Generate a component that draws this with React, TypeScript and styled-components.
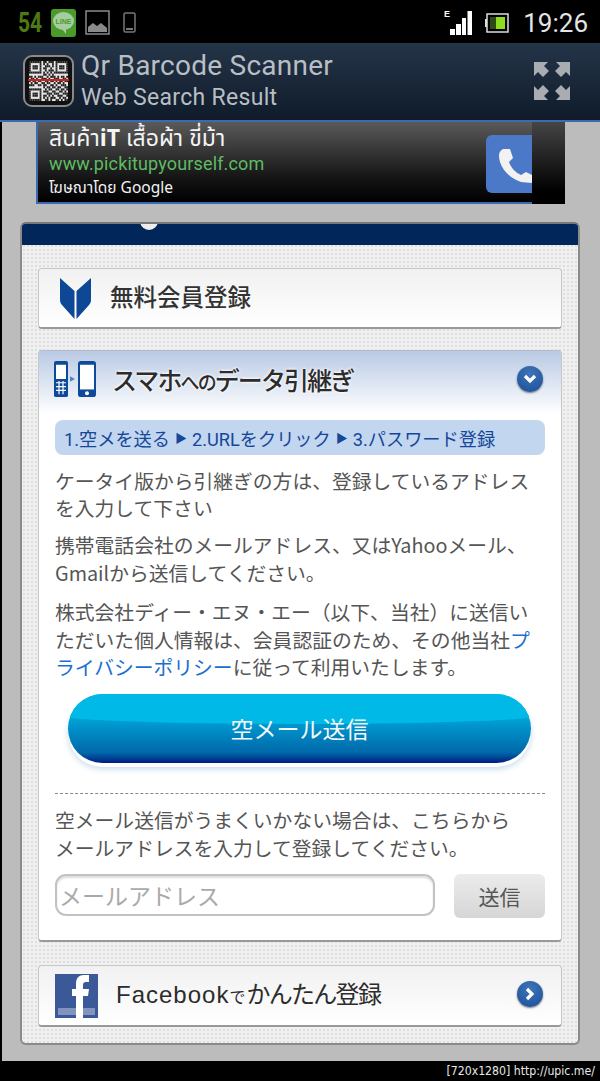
import styled, { createGlobalStyle } from "styled-components";

const GlobalStyle = createGlobalStyle`
  html, body {
    margin: 0;
    padding: 0;
    background: #000;
  }
  * {
    box-sizing: border-box;
  }
  body {
    font-family: "Roboto", "Noto Sans CJK JP", sans-serif;
  }
`;

const jpFont = `"Noto Sans CJK JP", sans-serif`;

const Screen = styled.div`
  width: 600px;
  height: 1081px;
  display: flex;
  flex-direction: column;
  overflow: hidden;
  background: #000;
`;

const StatusBar = styled.div`
  height: 44px;
  flex: none;
  display: flex;
  align-items: center;
  justify-content: space-between;
  padding: 2px 12px 0 18px;
  border-bottom: 1px solid #2b3642;
`;

const StatusGroup = styled.div`
  display: flex;
  align-items: center;
  gap: ${(p: { $gap: number }) => p.$gap}px;
`;

const Count = styled.span`
  font-family: "Roboto", sans-serif;
  font-size: 28px;
  font-weight: 700;
  color: #4e7a12;
  transform: scaleX(0.75);
  transform-origin: left center;
  width: 22px;
  margin-right: 2px;
`;

const Clock = styled.span`
  font-family: "Roboto", sans-serif;
  font-size: 26px;
  color: #e4e4e4;
  margin-left: 2px;
`;

const AppBar = styled.header`
  height: 78px;
  flex: none;
  display: flex;
  align-items: center;
  padding: 0 30px 2px 23px;
  background: linear-gradient(#243448, #0f1b29);
  border-bottom: 2px solid #3d68b4;
`;

const AppIcon = styled.div`
  width: 51px;
  height: 52px;
  flex: none;
  border-radius: 9px;
  border: 2px solid #8a8a8a;
  background: #111;
  padding: 4px;
  position: relative;
`;

const ScanLine = styled.div`
  position: absolute;
  left: 3px;
  right: 3px;
  top: 22px;
  height: 2px;
  background: #d3201f;
`;

const TitleBlock = styled.div`
  flex: 1;
  margin-left: 7px;
  color: #b9bec4;
`;

const AppTitle = styled.div`
  font-size: 28px;
  line-height: 29px;
  letter-spacing: 0.25px;
`;

const AppSubtitle = styled.div`
  font-size: 23px;
  line-height: 28px;
  margin-top: 4px;
  letter-spacing: 0.3px;
`;

const Page = styled.main`
  flex: 1;
  margin-left: 2px;
  background: #bcbcbc;
  display: flex;
  flex-direction: column;
  align-items: flex-start;
`;

const AdBanner = styled.div`
  width: 529px;
  height: 82px;
  margin-left: 34px;
  flex: none;
  display: flex;
  position: relative;
`;

const AdBody = styled.div`
  flex: 1;
  border: 2px solid #3d68b4;
  border-top: none;
  border-right: none;
  background: linear-gradient(#5a5a5a, #161616 68%, #000);
  padding: 2px 0 0 11px;
  position: relative;
  overflow: hidden;
`;

const AdHeadline = styled.div`
  font-family: "Noto Sans Thai", "Noto Sans", "DejaVu Sans", sans-serif;
  font-size: 23px;
  line-height: 30px;
  color: #f4f4f4;
`;

const AdUrl = styled.div`
  font-size: 18px;
  line-height: 22px;
  margin-top: -1px;
  color: #5ebb62;
  letter-spacing: 0.15px;
`;

const AdSponsor = styled.div`
  font-family: "Noto Sans Thai", "Noto Sans", "DejaVu Sans", sans-serif;
  font-size: 15.5px;
  line-height: 24px;
  margin-top: 2px;
  color: #f2f2f2;
`;

const CallTile = styled.div`
  position: absolute;
  right: 0;
  top: 13px;
  width: 46px;
  height: 58px;
  background: #4c78c8;
  border-radius: 6px 0 0 6px;
  overflow: hidden;
`;

const AdEdge = styled.div`
  width: 33px;
  flex: none;
  background: linear-gradient(#454545, #000 85%);
`;

const Panel = styled.section`
  width: 560px;
  height: 823px;
  margin: 18px 0 0 18px;
  flex: none;
  border-radius: 6px;
  border: 2px solid #8a8a8a;
  border-top-color: #777;
  background-color: #f0f0f0;
  background-image: radial-gradient(#dedede 1px, transparent 1px);
  background-size: 4px 4px;
  display: flex;
  flex-direction: column;
  padding: 0 16px;
`;

const PanelTop = styled.div`
  height: 21px;
  margin: 0 -16px;
  flex: none;
  background: #00265a;
  border-radius: 3px 3px 0 0;
  position: relative;
  overflow: hidden;
`;

const TopMark = styled.div`
  position: absolute;
  left: 118px;
  top: -12px;
  width: 18px;
  height: 18px;
  border-radius: 50%;
  background: #eee;
`;

const Card = styled.div`
  flex: none;
  border: 1px solid #c6c6c6;
  border-bottom: 2px solid #999;
  border-radius: 4px;
  background: linear-gradient(#f1f1f1, #fff);
`;

const RegisterCard = styled(Card)`
  height: 61px;
  margin-top: 23px;
  display: flex;
  align-items: center;
  padding-left: 21px;
`;

const RegisterTitle = styled.h2`
  margin: 0 0 4px 19px;
  font-family: ${jpFont};
  font-size: 23.5px;
  font-weight: 500;
  color: #333;
`;

const TransferCard = styled(Card)`
  height: 592px;
  margin-top: 21px;
  background: #fff;
  border-top-color: #b5bdca;
`;

const TransferHeader = styled.div`
  height: 63px;
  display: flex;
  align-items: center;
  padding: 0 18px 8px 14px;
  background: linear-gradient(#b9cae4, #fff);
`;

const TransferTitle = styled.h2`
  flex: 1;
  margin: 0 0 0 13px;
  font-family: ${jpFont};
  font-size: 25px;
  font-weight: 500;
  letter-spacing: -1.9px;
  color: #2c2c2c;
  text-shadow: 0 0 3px #fff, 0 0 3px #fff;
`;

const TitleKana = styled.span`
  font-size: 19px;
`;

const CircleButton = styled.div`
  width: 26px;
  height: 26px;
  flex: none;
  border-radius: 50%;
  background: radial-gradient(circle at 50% 30%, #3f74b8, #1a4f98);
  box-shadow: 0 1px 2px rgba(0, 0, 0, 0.5);
  display: flex;
  align-items: center;
  justify-content: center;
`;

const FacebookArrow = styled(CircleButton)`
  margin-bottom: 4px;
`;

const TransferBody = styled.div`
  padding: 6px 16px 0 16px;
`;

const StepBar = styled.div`
  height: 35px;
  border-radius: 8px;
  background: #c3d6ef;
  padding-left: 9px;
  display: flex;
  align-items: center;
  font-family: "Roboto", "Noto Sans CJK JP", sans-serif;
  font-size: 18.2px;
  color: #15479a;
  white-space: nowrap;
`;

const Arrow = styled.span`
  font-size: 12px;
  margin: 0 5px;
`;

const Copy = styled.p`
  margin: ${(p: { $top: number }) => p.$top}px 0 0;
  font-family: "Noto Sans CJK JP", sans-serif;
  font-size: 19.8px;
  line-height: 27.5px;
  color: #555;
  white-space: nowrap;
`;

const TextLink = styled.span`
  color: #1a6fd0;
`;

const SendMailButton = styled.div`
  width: 463px;
  height: 69px;
  margin: 13px 0 0 13px;
  border-radius: 35px;
  position: relative;
  overflow: hidden;
  background: linear-gradient(#00a4d8 35%, #0090c8 50%, #0068aa 85%, #001d80 100%);
  box-shadow: 0 4px 0 #fff, 0 6px 6px #c5dbe8;
  display: flex;
  align-items: center;
  justify-content: center;
  font-family: ${jpFont};
  font-size: 23px;
  color: #f4f8fb;

  &::before {
    content: "";
    position: absolute;
    top: 0;
    left: -10px;
    right: -10px;
    height: 44%;
    border-radius: 0 0 50% 50% / 0 0 9px 9px;
    background: #00b9e6;
  }
`;

const ButtonLabel = styled.span`
  position: relative;
`;

const Divider = styled.hr`
  margin: 30px 0 0;
  border: none;
  border-top: 1px dashed #888;
`;

const FormRow = styled.div`
  display: flex;
  align-items: flex-start;
  justify-content: space-between;
  margin-top: 12.5px;
`;

const MailInput = styled.div`
  width: 380px;
  height: 42px;
  border-radius: 11px;
  border: 2px solid #c2c2c2;
  box-shadow: inset 0 2px 2px #ddd;
  padding-left: 2px;
  display: flex;
  align-items: center;
  font-family: ${jpFont};
  font-size: 23px;
  color: #aaa;
`;

const SubmitButton = styled.div`
  width: 91px;
  height: 44px;
  border-radius: 6px;
  background: linear-gradient(#ececec, #d6d6d6);
  display: flex;
  align-items: center;
  justify-content: center;
  font-family: ${jpFont};
  font-size: 21px;
  color: #555;
`;

const FacebookCard = styled(Card)`
  height: 62px;
  margin-top: 23px;
  display: flex;
  align-items: center;
  padding: 0 18px 0 16px;
`;

const FacebookTitle = styled.h2`
  flex: 1;
  margin: 0 0 6px 18px;
  font-family: "Liberation Sans", ${jpFont};
  font-size: 24px;
  font-weight: 400;
  letter-spacing: 1px;
  color: #2c2c2c;
`;

const SmallKana = styled.span`
  font-family: ${jpFont};
  font-size: 16px;
`;

const KanaRun = styled.span`
  font-family: ${jpFont};
  letter-spacing: -1.7px;
`;

const Footer = styled.footer`
  height: 20px;
  flex: none;
  display: flex;
  align-items: center;
  justify-content: flex-end;
  padding-right: 5px;
  font-family: "DejaVu Sans", sans-serif;
  font-stretch: condensed;
  font-size: 12.2px;
  color: #e8e8e8;
  white-space: nowrap;
`;

const QR_ROWS = [
  "1111111011011101111111",
  "1000001010100101000001",
  "1011101001110101011101",
  "1011101011001001011101",
  "1000001001011101000001",
  "1111111010101011111111",
  "0000000011010100000000",
  "1101011100101110101101",
  "0110100111010011100110",
  "1011011001101101011011",
  "0101100110110010110100",
  "1110011011001101001110",
  "0000000010110110110011",
  "1111111001011001101101",
  "1000001011100110011010",
  "1011101000111011100111",
  "1011101011010100111001",
  "1000001010101110010110",
  "1111111001101001101011",
];

function QrCode() {
  return (
    <svg width="39" height="40" viewBox="0 0 22 19" preserveAspectRatio="none">
      <rect width="22" height="19" fill="#e6e6e6" />
      {QR_ROWS.map((row, y) =>
        row
          .split("")
          .map((cell, x) =>
            cell === "1" ? (
              <rect key={`${x}-${y}`} x={x} y={y} width="1" height="1" fill="#222" />
            ) : null
          )
      )}
    </svg>
  );
}

function App() {
  return (
    <>
      <GlobalStyle />
      <Screen>
        <StatusBar>
          <StatusGroup $gap={9}>
            <Count>54</Count>
            <svg width="25" height="28" viewBox="0 0 25 28">
              <rect width="25" height="28" rx="3" fill="#4b9a2c" />
              <ellipse cx="12.5" cy="12" rx="10.5" ry="9" fill="#a6cda0" />
              <path d="M11 20l4 5v-5z" fill="#a6cda0" />
              <text x="12.5" y="15" fontFamily="Liberation Sans" fontSize="7" fontWeight="700" textAnchor="middle" fill="#4b9a2c">LINE</text>
            </svg>
            <svg width="25" height="25" viewBox="0 0 25 25">
              <rect x="1" y="1" width="23" height="23" fill="none" stroke="#8a8a8a" strokeWidth="1.5" />
              <path d="M3 22v-5l5-4 4 3 4-3 6 5v4z" fill="#8a8a8a" />
            </svg>
            <svg width="13" height="21" viewBox="0 0 13 21" style={{ marginLeft: 4 }}>
              <rect x="1" y="1" width="11" height="19" rx="1.5" fill="none" stroke="#777" strokeWidth="1.5" />
              <rect x="3" y="16" width="7" height="2" fill="#777" />
            </svg>
          </StatusGroup>
          <StatusGroup $gap={12}>
            <svg width="29" height="27" viewBox="0 0 29 27">
              <text x="0" y="8" fontFamily="Liberation Sans" fontSize="9" fontWeight="700" fill="#fff">E</text>
              <rect x="6" y="20" width="5" height="6" fill="#fff" />
              <rect x="12" y="15" width="5" height="11" fill="#fff" />
              <rect x="18" y="9" width="4" height="17" fill="#fff" />
              <rect x="23.5" y="2" width="4.5" height="24" fill="#fff" />
            </svg>
            <svg width="24" height="20" viewBox="0 0 24 20">
              <rect x="2" y="1" width="21" height="18" fill="#000" stroke="#ddd" strokeWidth="1.5" />
              <rect x="0" y="6" width="2" height="8" fill="#ddd" />
              <rect x="5" y="4" width="6" height="12" fill="#2c4a14" />
              <rect x="11" y="4" width="9" height="12" fill="#8fdc1c" />
            </svg>
            <Clock>19:26</Clock>
          </StatusGroup>
        </StatusBar>

        <AppBar>
          <AppIcon>
            <QrCode />
            <ScanLine />
          </AppIcon>
          <TitleBlock>
            <AppTitle>Qr Barcode Scanner</AppTitle>
            <AppSubtitle>Web Search Result</AppSubtitle>
          </TitleBlock>
          <svg width="36" height="38" viewBox="0 0 36 38" fill="#a9adb1">
            <path d="M0 0h14l-4 4 5 5-6 6-5-5-4 4zM36 0H22l4 4-5 5 6 6 5-5 4 4zM0 38V24l4 4 5-5 6 6-5 5 4 4zM36 38V24l-4 4-5-5-6 6 5 5-4 4z" />
          </svg>
        </AppBar>

        <Page>
          <AdBanner>
            <AdBody>
              <AdHeadline>สินค้า<b>iT</b> เสื้อผ้า ขี่ม้า</AdHeadline>
              <AdUrl>www.pickitupyourself.com</AdUrl>
              <AdSponsor>โฆษณาโดย Google</AdSponsor>
              <CallTile>
                <svg width="46" height="58" viewBox="0 0 46 58">
                  <path d="M17 14c-4 2-5 6-3 13 3 9 11 17 21 20l11 1v-8l-6-3-5 3c-5-2-10-7-12-13l4-4-3-9z" fill="#f2f2f2" />
                </svg>
              </CallTile>
            </AdBody>
            <AdEdge />
          </AdBanner>

          <Panel>
            <PanelTop>
              <TopMark />
            </PanelTop>
            <RegisterCard>
              <svg width="31" height="41" viewBox="0 0 31 41" fill="#0d4796">
                <path d="M0 0l14.5 13v28L2 27c-1.5-2-2-3-2-6zM31 0L16.5 13v28L29 27c1.5-2 2-3 2-6z" />
              </svg>
              <RegisterTitle>無料会員登録</RegisterTitle>
            </RegisterCard>

            <TransferCard>
              <TransferHeader>
                <svg width="46" height="38" viewBox="0 0 46 40" preserveAspectRatio="none">
                  <rect x="1" y="1" width="14" height="38" rx="2" fill="#0f4a9a" />
                  <rect x="3" y="5" width="10" height="15" fill="#fff" />
                  <path d="M3 24h10M3 28h10M3 32h10M6 22v14M10 22v14" stroke="#fff" strokeWidth="1.2" />
                  <path d="M17 17l5 3-5 3z" fill="#4d86c6" />
                  <rect x="25" y="1" width="18" height="38" rx="3" fill="#0f4a9a" />
                  <rect x="27" y="5" width="14" height="26" fill="#fff" />
                  <circle cx="34" cy="35" r="2" fill="#fff" />
                </svg>
                <TransferTitle>スマホ<TitleKana>への</TitleKana>データ引継ぎ</TransferTitle>
                <CircleButton>
                  <svg width="16" height="12" viewBox="0 0 16 12">
                    <path d="M3 3l5 5 5-5" fill="none" stroke="#fff" strokeWidth="3.2" />
                  </svg>
                </CircleButton>
              </TransferHeader>
              <TransferBody>
                <StepBar>
                  1.空メを送る<Arrow>▶</Arrow>2.URLをクリック<Arrow>▶</Arrow>3.パスワード登録
                </StepBar>
                <Copy $top={11.5}>
                  ケータイ版から引継ぎの方は、登録しているアドレス<br />を入力して下さい
                </Copy>
                <Copy $top={9.5}>
                  携帯電話会社のメールアドレス、又はYahooメール、<br />Gmailから送信してください。
                </Copy>
                <Copy $top={12}>
                  株式会社ディー・エヌ・エー（以下、当社）に送信い<br />ただいた個人情報は、会員認証のため、その他当社<TextLink>プ</TextLink>
                  <br />
                  <TextLink>ライバシーポリシー</TextLink>に従って利用いたします。
                </Copy>
                <SendMailButton>
                  <ButtonLabel>空メール送信</ButtonLabel>
                </SendMailButton>
                <Divider />
                <Copy $top={12.5}>
                  空メール送信がうまくいかない場合は、こちらから<br />メールアドレスを入力して登録してください。
                </Copy>
                <FormRow>
                  <MailInput>メールアドレス</MailInput>
                  <SubmitButton>送信</SubmitButton>
                </FormRow>
              </TransferBody>
            </TransferCard>

            <FacebookCard>
              <svg width="43" height="44" viewBox="0 0 43 44">
                <rect width="43" height="44" fill="#3b5998" />
                <rect x="3" y="34" width="37" height="7" fill="#8294bd" />
                <path d="M21 44V22h-4v-7h4v-5c0-6 3-9 8-9h5v7h-3c-2 0-3 1-3 3v4h6l-1 7h-5v22z" fill="#fff" />
              </svg>
              <FacebookTitle>
                Facebook<SmallKana>で</SmallKana>
                <KanaRun>かんたん登録</KanaRun>
              </FacebookTitle>
              <FacebookArrow>
                <svg width="12" height="16" viewBox="0 0 12 16">
                  <path d="M3 3l5 5-5 5" fill="none" stroke="#fff" strokeWidth="3.2" />
                </svg>
              </FacebookArrow>
            </FacebookCard>
          </Panel>
        </Page>

        <Footer>[720x1280] http://upic.me/</Footer>
      </Screen>
    </>
  );
}

export default App;
